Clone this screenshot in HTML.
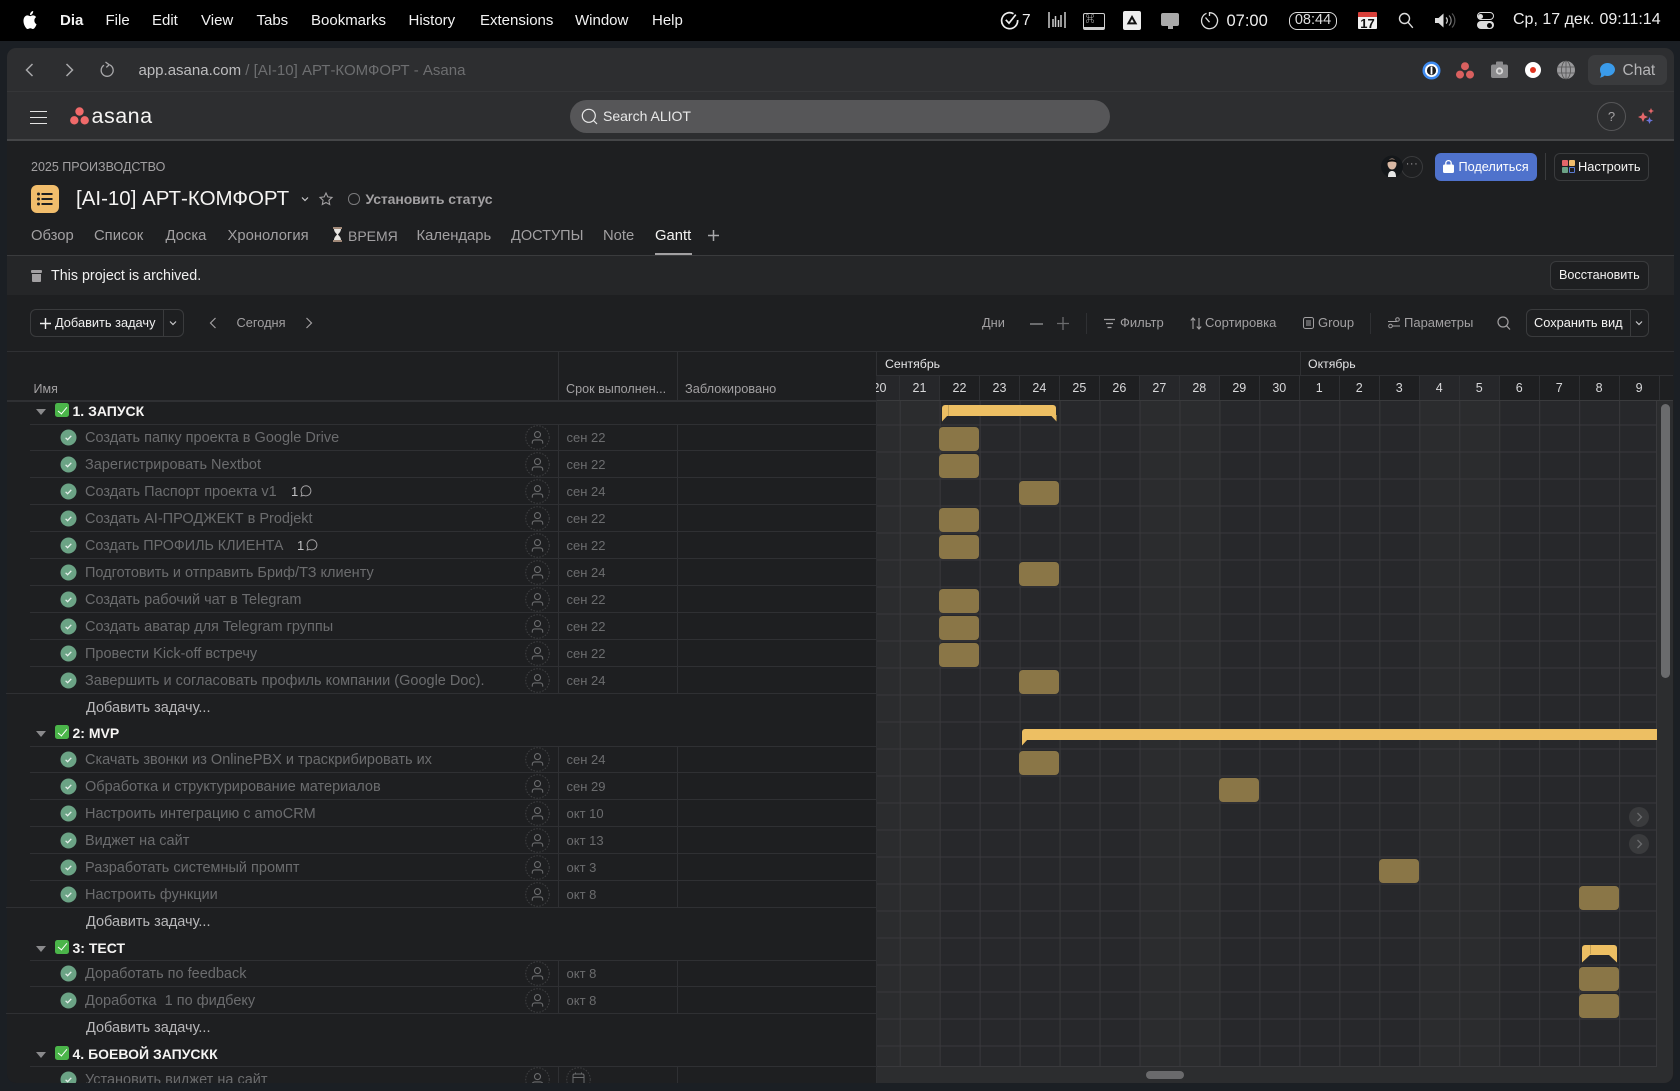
<!DOCTYPE html>
<html lang="ru"><head><meta charset="utf-8"><title>[AI-10] АРТ-КОМФОРТ - Asana</title>
<style>
*{box-sizing:border-box}
html,body{margin:0;padding:0;width:1680px;height:1091px;overflow:hidden;background:#1b1f24;font-family:"Liberation Sans","Noto Sans CJK SC",sans-serif;color:#f5f4f3}
.a{position:absolute;white-space:nowrap;line-height:20px}
.b{position:absolute}
svg{position:absolute;overflow:visible}
.m{font-size:15px;color:#f2f2f2;top:10.5px}
.tab{font-size:14.8px;color:#a2a0a2;top:225.5px}
.tb{font-size:13px;color:#a2a0a2;top:313px}
.r{position:absolute;left:30px;width:846px;height:27px;border-bottom:1px solid #2f3033}
.r.e{left:6px;width:870px}
.r.e>*{margin-left:24px}
.r .x{position:absolute;left:55px;top:4px;font-size:14.5px;line-height:20px;color:#6b6c6e;white-space:nowrap}
.r .d{position:absolute;left:536.5px;top:4px;font-size:13px;line-height:20px;color:#6b6c6e}
.r .n{position:absolute;left:0;top:4px;font-size:13px;line-height:20px;color:#8a8a8c}
.r svg.k{left:30px;top:5px;width:17px;height:17px}
.r svg.p{left:495px;top:1px;width:25px;height:25px}
.g{position:absolute;left:36px;height:14px}
.g i{position:absolute;left:0;top:3px;width:0;height:0;border-left:5px solid transparent;border-right:5px solid transparent;border-top:6px solid #8a8a8c}
.g b{position:absolute;left:19px;top:-3px;width:14px;height:14px;background:#4bb54a;border-radius:2.5px}
.g b:after{content:"";position:absolute;left:4.5px;top:1.5px;width:4px;height:8px;border:solid #fff;border-width:0 1.8px 1.8px 0;transform:rotate(40deg)}
.g span{position:absolute;left:36.5px;top:-5px;font-size:14px;font-weight:700;line-height:20px;color:#f5f4f3;white-space:nowrap}
.add{position:absolute;left:86px;font-size:14.5px;line-height:20px;color:#b8b8ba;white-space:nowrap}
.v{position:absolute;width:1px;background:#2f3033}
.bar{position:absolute;width:40px;height:24px;background:#8a7647;border-radius:4px}
.days{position:absolute;left:876px;top:376px;width:797px;height:24px;overflow:hidden;background:#1e1f21}
.days div{position:absolute;top:0;width:39.98px;height:24px;border-right:1px solid #2f3033;font-size:12.5px;line-height:24px;text-align:center;color:#d8d8da}
.days div.w{background:#26272a}
.gm{position:absolute;background:#edbf63}
.btn{position:absolute;border:1px solid #3a3b3d;border-radius:6px;background:#1e1f21}
</style></head><body>
<svg width="0" height="0" style="position:absolute">
<symbol id="k" viewBox="0 0 17 17"><circle cx="8.5" cy="8.5" r="8" fill="#6ba385"/><path d="M5.6 8.8l2 1.9 3.7-3.9" fill="none" stroke="#e8f0ec" stroke-width="1.3"/></symbol>
<symbol id="p" viewBox="0 0 25 25"><circle cx="12.5" cy="12.5" r="11.8" fill="none" stroke="#3e3f41" stroke-dasharray="1.6 1.4"/><circle cx="12.5" cy="9.6" r="3" fill="none" stroke="#6b6c6e" stroke-width="1.1"/><path d="M7.3 18.6v-1.3c0-1.4 1-2.4 2.4-2.4h5.6c1.4 0 2.4 1 2.4 2.4v1.3" fill="none" stroke="#6b6c6e" stroke-width="1.1"/></symbol>
<symbol id="ch" viewBox="0 0 10 10"><path d="M2 3.5l3 3 3-3" fill="none" stroke="#c8c8ca" stroke-width="1.2"/></symbol>
</svg>

<!-- macOS menu bar -->
<div class="b" style="left:0;top:0;width:1680px;height:41px;background:#000"></div>
<svg style="left:22px;top:11px" width="16" height="18" viewBox="0 0 24 24" preserveAspectRatio="none"><path fill="#fff" d="M12.152 6.896c-.948 0-2.415-1.078-3.96-1.04-2.04.027-3.91 1.183-4.961 3.014-2.117 3.675-.546 9.103 1.519 12.09 1.013 1.454 2.208 3.09 3.792 3.039 1.52-.065 2.09-.987 3.935-.987 1.831 0 2.35.987 3.96.948 1.637-.026 2.676-1.48 3.676-2.948 1.156-1.688 1.636-3.325 1.662-3.415-.039-.013-3.182-1.221-3.22-4.857-.026-3.04 2.48-4.494 2.597-4.559-1.429-2.09-3.623-2.324-4.39-2.376-2-.156-3.675 1.09-4.61 1.09zM15.53 3.83c.843-1.012 1.4-2.427 1.245-3.83-1.207.052-2.662.805-3.532 1.818-.78.896-1.454 2.338-1.273 3.714 1.338.104 2.715-.688 3.559-1.701"/></svg>
<div class="a m" style="left:60px;font-weight:700">Dia</div>
<div class="a m" style="left:105.5px">File</div>
<div class="a m" style="left:152px">Edit</div>
<div class="a m" style="left:201px">View</div>
<div class="a m" style="left:256.5px">Tabs</div>
<div class="a m" style="left:311px">Bookmarks</div>
<div class="a m" style="left:408.5px">History</div>
<div class="a m" style="left:480px">Extensions</div>
<div class="a m" style="left:575px">Window</div>
<div class="a m" style="left:652px">Help</div>

<svg style="left:1000px;top:11px" width="19" height="19" viewBox="0 0 19 19" fill="none" stroke="#eee" stroke-width="1.7"><path d="M13.5 2.7A8 8 0 1 0 17.6 9"/><path d="M5.8 8.8l3.2 3.4 6.800-8.600"/></svg>
<div class="a" style="left:1022px;top:11px;font-size:15.5px;color:#eee">7</div>
<svg style="left:1048px;top:12px" width="18" height="16" viewBox="0 0 18 16" stroke="#ccc" stroke-width="1.5"><path d="M1 0v16M5 7v8M7.5 4v11M10.5 8v7M13 3v12M17 0v16"/></svg>
<div class="b" style="left:1083px;top:13px;width:22px;height:16.5px;border:1.3px solid #d0d0d0;border-bottom-width:3px;border-radius:2px;font-size:9px;line-height:11px;color:#ddd;padding-left:1.5px">⌘</div>
<div class="b" style="left:1123px;top:11px;width:18px;height:19px;background:#eee;border-radius:2px"></div>
<svg style="left:1127px;top:15px" width="10" height="10" viewBox="0 0 10 10"><path d="M5 2L8.600 8.400H1.400z" fill="none" stroke="#111" stroke-width="2"/></svg>
<div class="b" style="left:1161px;top:13px;width:18px;height:13px;background:#aaa;border-radius:2px"></div>
<div class="b" style="left:1167.5px;top:26px;width:5px;height:3px;background:#aaa"></div>
<svg style="left:1200px;top:11px" width="19" height="20" viewBox="0 0 19 20" fill="none" stroke="#ddd" stroke-width="1.3"><path d="M6.5 2.3a8 8 0 1 0 3-.6V5"/><path d="M5.5 6.5l4 4.7"/></svg>
<div class="a" style="left:1226.500px;top:10.500px;font-size:16.500px;color:#eee">07:00</div>
<div class="a" style="left:1289px;top:12px;width:48px;height:17.500px;border:1.300px solid #ddd;border-radius:8px;font-size:14.500px;line-height:15px;text-align:center;color:#ddd">08:44</div>
<div class="b" style="left:1358px;top:12px;width:19px;height:17px;background:#f2f2f2;border-top:5px solid #d8403a;border-radius:1px;font-size:13px;line-height:13px;text-align:center;color:#111;font-weight:700">17</div>
<svg style="left:1398px;top:12px" width="16" height="17" viewBox="0 0 16 17" fill="none" stroke="#ddd" stroke-width="1.400"><circle cx="6.500" cy="6.500" r="5"/><path d="M10.200 10.400l4.600 5.400"/></svg>
<svg style="left:1434px;top:12px" width="22" height="17" viewBox="0 0 22 17" fill="none"><path d="M1 6h3.500L9.500 1.500v14L4.500 11H1z" fill="#ddd"/><path d="M12 5.500a4 4 0 0 1 0 6" stroke="#ccc" stroke-width="1.200"/><path d="M15 3.500a7 7 0 0 1 0 10" stroke="#888" stroke-width="1.200"/><path d="M18 1.500a10 10 0 0 1 0 14" stroke="#555" stroke-width="1.200"/></svg>
<div class="b" style="left:1477px;top:12px;width:16.500px;height:8px;border:1.400px solid #ddd;border-radius:4px"></div>
<div class="b" style="left:1478px;top:13.500px;width:5px;height:5px;background:#ddd;border-radius:50%"></div>
<div class="b" style="left:1477px;top:21px;width:16.500px;height:8px;background:#ddd;border-radius:4px"></div>
<div class="b" style="left:1487px;top:22.500px;width:5px;height:5px;background:#000;border-radius:50%"></div>
<div class="a" style="left:1513px;top:10px;font-size:16px;color:#eee">Ср, 17 дек.</div>
<div class="a" style="left:1599.500px;top:10px;font-size:16px;color:#eee">09:11:14</div>

<!-- Window -->
<div class="b" style="left:6.500px;top:48px;width:1667px;height:1035px;background:#1e1f21;border-radius:9px;overflow:hidden">
  <div class="b" style="left:0;top:0;width:1667px;height:92px;background:#2d2e30"></div>
  <div class="b" style="left:0;top:43px;width:1667px;height:1px;background:#353638"></div>
  <div class="b" style="left:0;top:91px;width:1667px;height:2px;background:#454648"></div>
  <div class="b" style="left:0;top:207px;width:1667px;height:1px;background:#3a3b3d"></div>
  <div class="b" style="left:0;top:208px;width:1667px;height:39px;background:#252628"></div>
</div>

<!-- Browser toolbar -->
<svg style="left:25px;top:63px" width="9" height="14" viewBox="0 0 9 14" fill="none" stroke="#a8a8aa" stroke-width="1.500"><path d="M7.500 1L1.500 7l6 6"/></svg>
<svg style="left:65px;top:63px" width="9" height="14" viewBox="0 0 9 14" fill="none" stroke="#a8a8aa" stroke-width="1.500"><path d="M1.500 1l6 6-6 6"/></svg>
<svg style="left:100px;top:61px" width="14" height="16" viewBox="0 0 14 16" fill="none" stroke="#a8a8aa" stroke-width="1.300"><path d="M4 4.200A6 6 0 1 0 10 4"/><path d="M5.500 1l3.800 2.800-3 2.600"/></svg>
<div class="a" style="left:138.500px;top:60.500px;font-size:15px;color:#bdbdbf">app.asana.com <span style="color:#6d6e70">/ [AI-10] АРТ-КОМФОРТ - Asana</span></div>

<svg style="left:1421.500px;top:60.500px" width="19" height="19" viewBox="0 0 19 19"><circle cx="9.500" cy="9.500" r="9" fill="#3f8bf0"/><circle cx="9.500" cy="9.500" r="6.500" fill="#fff"/><circle cx="9.500" cy="9.500" r="4.600" fill="#1c1c1e"/><rect x="8.600" y="5.500" width="1.800" height="8" fill="#fff"/></svg>
<svg style="left:1456px;top:61.500px" width="18" height="17" viewBox="0 0 18 17" fill="#d9605f"><circle cx="9" cy="4.200" r="4"/><circle cx="4" cy="12.600" r="4"/><circle cx="14" cy="12.600" r="4"/></svg>
<svg style="left:1490.500px;top:61px" width="17" height="17" viewBox="0 0 17 17"><rect x="0" y="3.500" width="17" height="13.500" rx="2" fill="#8c8c8e"/><rect x="5" y="0.500" width="7" height="4" rx="1" fill="#8c8c8e"/><circle cx="8.500" cy="10" r="3.600" fill="#d8d8d8"/><circle cx="8.500" cy="10" r="1.800" fill="#8c8c8e"/></svg>
<svg style="left:1525px;top:62px" width="16" height="16" viewBox="0 0 16 16"><circle cx="8" cy="8" r="8" fill="#fff"/><circle cx="8" cy="8" r="3" fill="#e0321e"/></svg>
<svg style="left:1557px;top:61px" width="18" height="18" viewBox="0 0 18 18" fill="none"><circle cx="9" cy="9" r="9" fill="#9a9a9c"/><g stroke="#555" stroke-width=".8"><path d="M0 6h18M0 12h18M9 0v18"/><ellipse cx="9" cy="9" rx="4.500" ry="9"/></g></svg>
<div class="b" style="left:1588px;top:55px;width:79px;height:30px;background:#3a3b3d;border-radius:7px"></div>
<svg style="left:1599px;top:62px" width="16" height="17" viewBox="0 0 16 17"><path d="M8.500 1C12.500 1 16 3.900 16 7.500S12.500 14 8.500 14c-1 0-2-.2-2.800-.5C4.700 14.600 2.800 15.500.8 15.600 1.800 14.500 2.200 13.100 2.100 11.700 1.300 10.700 1 9.200 1 7.500 1 3.900 4.500 1 8.500 1z" fill="#3a9bea"/></svg>
<div class="a" style="left:1622.500px;top:61px;font-size:15.500px;color:#b4b4b6">Chat</div>

<!-- Asana top bar -->
<div class="b" style="left:30px;top:110.500px;width:17px;height:1.500px;background:#e4e4e4"></div>
<div class="b" style="left:30px;top:116.500px;width:17px;height:1.500px;background:#e4e4e4"></div>
<div class="b" style="left:30px;top:122.500px;width:17px;height:1.500px;background:#e4e4e4"></div>
<svg style="left:70px;top:107px" width="19" height="18" viewBox="0 0 19 18" fill="#f06a6a"><circle cx="9.500" cy="4.500" r="4.200"/><circle cx="4.300" cy="13.300" r="4.200"/><circle cx="14.700" cy="13.300" r="4.200"/></svg>
<div class="a" style="left:91.500px;top:105px;font-size:21.500px;color:#f5f4f3;line-height:22px;letter-spacing:.5px">asana</div>
<div class="b" style="left:570px;top:100px;width:540px;height:32.500px;background:#565658;border-radius:17px"></div>
<svg style="left:581px;top:108px" width="17" height="17" viewBox="0 0 17 17" fill="none" stroke="#e8e8e8" stroke-width="1.200"><circle cx="7.800" cy="7.800" r="6.500"/><path d="M12.500 12.500l3.500 3.500"/></svg>
<div class="a" style="left:603px;top:106px;font-size:14px;color:#e8e8e8">Search ALIOT</div>
<div class="b" style="left:1597px;top:102px;width:29px;height:29px;border:1px solid #565658;border-radius:50%;font-size:13px;line-height:27px;text-align:center;color:#a2a0a2">?</div>
<svg style="left:1638px;top:108px" width="18" height="18" viewBox="0 0 18 18"><path d="M5 4l1.500 3.500L10 9 6.500 10.500 5 14 3.500 10.500 0 9l3.500-1.500z" fill="#e4676a"/><path d="M13 0l.9 2.100 2.100.9-2.100.9L13 6l-.9-2.100L10 3l2.100-.9z" fill="#e4676a"/><path d="M11.500 9l1 2.500 2.500 1-2.500 1-1 2.500-1-2.500-2.500-1 2.500-1z" fill="#6a74d8"/></svg>

<!-- Project header -->
<div class="a" style="left:31px;top:157px;font-size:12.500px;color:#a2a0a2">2025 ПРОИЗВОДСТВО</div>
<div class="b" style="left:30.500px;top:185px;width:28px;height:27.500px;background:#f1bd6c;border-radius:6px"></div>
<svg style="left:37px;top:192px" width="16" height="14" viewBox="0 0 16 14" fill="#1e1f21"><circle cx="1.500" cy="2" r="1.500"/><circle cx="1.500" cy="7" r="1.500"/><circle cx="1.500" cy="12" r="1.500"/><rect x="4.500" y="1" width="11" height="2"/><rect x="4.500" y="6" width="11" height="2"/><rect x="4.500" y="11" width="11" height="2"/></svg>
<div class="a" style="left:76px;top:189px;font-size:20.500px;color:#f5f4f3">[AI-10] АРТ-КОМФОРТ</div>
<svg style="left:300px;top:194px" width="10" height="10"><use href="#ch"/></svg>
<svg style="left:319px;top:191.500px" width="14" height="14" viewBox="0 0 14 14" fill="none" stroke="#a2a0a2" stroke-width="1.100"><path d="M7 1l1.800 3.900 4.200.5-3.100 2.900.8 4.200L7 10.500l-3.700 2 .8-4.200L1 5.400l4.200-.5z"/></svg>
<div class="b" style="left:348px;top:193px;width:11.500px;height:11.500px;border:1px solid #7a7a7c;border-radius:50%"></div>
<div class="a" style="left:365.500px;top:189px;font-size:14px;color:#a2a0a2;font-weight:700;letter-spacing:-.1px">Установить статус</div>

<div class="a tab" style="left:31px">Обзор</div>
<div class="a tab" style="left:94px">Список</div>
<div class="a tab" style="left:165.500px">Доска</div>
<div class="a tab" style="left:227.500px">Хронология</div>
<svg style="left:332px;top:227px" width="11" height="15" viewBox="0 0 11 15"><rect x="1" y="0" width="9" height="2" fill="#a08878"/><rect x="1" y="13" width="9" height="2" fill="#a08878"/><path d="M2 2h7c0 3-2.500 4.500-3 5.500.5 1 3 2.500 3 5.500H2c0-3 2.500-4.500 3-5.500C4.500 6.500 2 5 2 2z" fill="#e8e6e2"/></svg>
<div class="a tab" style="left:348px;font-size:14px">ВРЕМЯ</div>
<div class="a tab" style="left:416.500px">Календарь</div>
<div class="a tab" style="left:511px;font-size:14.500px">ДОСТУПЫ</div>
<div class="a tab" style="left:603px">Note</div>
<div class="a tab" style="left:655px;color:#f5f4f3;font-weight:400">Gantt</div>
<div class="b" style="left:655px;top:253px;width:36.500px;height:2px;background:#a2a0a2"></div>
<svg style="left:707px;top:229px" width="13" height="13" stroke="#a8a8aa" stroke-width="1.500"><path d="M6.500 1v11M1 6.500h11"/></svg>

<div class="b" style="left:1434.500px;top:152.500px;width:102.500px;height:28.500px;background:#4f72cc;border-radius:6px"></div>
<svg style="left:1443px;top:160px" width="11" height="13" viewBox="0 0 11 13"><rect x="0" y="4.500" width="11" height="8.500" rx="1.500" fill="#fff"/><path d="M2.800 5V3.300a2.700 2.700 0 0 1 5.400 0V5" fill="none" stroke="#fff" stroke-width="1.300"/></svg>
<div class="a" style="left:1458.500px;top:157px;font-size:12.700px;color:#fff">Поделиться</div>
<div class="b" style="left:1545px;top:153px;width:1px;height:27px;background:#3a3b3d"></div>
<div class="btn" style="left:1554px;top:152.500px;width:95px;height:28.500px"></div>
<div class="b" style="left:1562px;top:160px;width:5.500px;height:5.500px;background:#e4676a;border-radius:1px"></div>
<div class="b" style="left:1569px;top:160px;width:5.500px;height:5.500px;background:#f1bd6c;border-radius:1px"></div>
<div class="b" style="left:1562px;top:167px;width:5.500px;height:5.500px;background:#6ba385;border-radius:1px"></div>
<div class="b" style="left:1569px;top:167px;width:5.500px;height:5.500px;border:1px solid #5a7ad0;border-radius:1px"></div>
<div class="a" style="left:1578px;top:157px;font-size:12.800px;color:#f5f4f3">Настроить</div>
<div class="b" style="left:1401px;top:155.500px;width:22px;height:22px;border:1px solid #3a3b3d;border-radius:50%;font-size:11px;line-height:15px;text-align:center;color:#a2a0a2;letter-spacing:.5px">···</div>
<svg style="left:1381px;top:155px" width="22" height="23" viewBox="0 0 22 23"><circle cx="11" cy="11.500" r="11" fill="#14171a"/><ellipse cx="11" cy="9" rx="4.500" ry="5.500" fill="#d8b8a4"/><path d="M6 8c0-5 10-5 10 0-2-2-8-2-10 0z" fill="#0c0c0c"/><path d="M7 22c0-5 2-6 4-6s4 1 4 6z" fill="#e6e6e6"/></svg>

<!-- Archive banner -->
<svg style="left:31px;top:270px" width="11" height="12" viewBox="0 0 11 12" fill="#a2a0a2"><rect x="0" y="0" width="11" height="3" rx="1"/><path d="M1 4h9v7a1 1 0 0 1-1 1H2a1 1 0 0 1-1-1z"/></svg>
<div class="a" style="left:51px;top:265.500px;font-size:14.300px;color:#f0f0f0">This project is archived.</div>
<div class="btn" style="left:1550px;top:261px;width:99px;height:28.500px"></div>
<div class="a" style="left:1559px;top:265px;font-size:12.600px;color:#f5f4f3">Восстановить</div>

<!-- Toolbar -->
<div class="btn" style="left:30px;top:309px;width:154px;height:28px"></div>
<div class="b" style="left:163px;top:309px;width:1px;height:28px;background:#3a3b3d"></div>
<svg style="left:40px;top:318px" width="11" height="11" stroke="#f0f0f0" stroke-width="1.400"><path d="M5.500 0v11M0 5.500h11"/></svg>
<div class="a" style="left:55px;top:313px;font-size:12.800px;color:#f0f0f0">Добавить задачу</div>
<svg style="left:168px;top:318px" width="10" height="10"><use href="#ch"/></svg>
<svg style="left:209px;top:317px" width="8" height="12" viewBox="0 0 8 12" fill="none" stroke="#a2a0a2" stroke-width="1.200"><path d="M6.500 1l-5 5 5 5"/></svg>
<div class="a tb" style="left:236.500px;font-size:12.800px">Сегодня</div>
<svg style="left:305px;top:317px" width="8" height="12" viewBox="0 0 8 12" fill="none" stroke="#a2a0a2" stroke-width="1.200"><path d="M1.500 1l5 5-5 5"/></svg>

<div class="a tb" style="left:982px;font-size:12.800px">Дни</div>
<div class="b" style="left:1029.500px;top:323px;width:13px;height:1.500px;background:#6b6c6e"></div>
<svg style="left:1057px;top:317px" width="12" height="13" stroke="#6b6c6e" stroke-width="1.300"><path d="M6 0v13M0 6.500h12"/></svg>
<div class="b" style="left:1086px;top:313px;width:1px;height:21px;background:#2f3033"></div>
<svg style="left:1104px;top:317.500px" width="11" height="11" stroke="#a2a0a2" stroke-width="1.200"><path d="M0 1.500h11M2 5.500h7M3.500 9.500h4"/></svg>
<div class="a tb" style="left:1120px">Фильтр</div>
<svg style="left:1190px;top:316.500px" width="12" height="13" fill="none" stroke="#a2a0a2" stroke-width="1.100"><path d="M3 12V1M.8 3.500L3 1l2.200 2.500M9 1v11M6.800 9.500L9 12l2.200-2.500"/></svg>
<div class="a tb" style="left:1205px">Сортировка</div>
<svg style="left:1303px;top:317px" width="11" height="12" fill="none" stroke="#a2a0a2" stroke-width="1"><rect x=".5" y=".5" width="10" height="11" rx="2"/><path d="M3 4h5M3 6h5M3 8h5"/></svg>
<div class="a tb" style="left:1318px">Group</div>
<div class="b" style="left:1370px;top:313px;width:1px;height:21px;background:#2f3033"></div>
<svg style="left:1387.500px;top:317px" width="12" height="12" fill="none" stroke="#a2a0a2" stroke-width="1"><circle cx="2.500" cy="9" r="1.800"/><circle cx="9.500" cy="2.500" r="1.800"/><path d="M0 4.500h9M4.500 9H12"/></svg>
<div class="a tb" style="left:1404px">Параметры</div>
<svg style="left:1497px;top:315.500px" width="14" height="14" fill="none" stroke="#a2a0a2" stroke-width="1.200"><circle cx="6" cy="6" r="5"/><path d="M9.500 9.800L13 13.500"/></svg>
<div class="btn" style="left:1525.500px;top:309px;width:123.500px;height:28px"></div>
<div class="b" style="left:1630px;top:309px;width:1px;height:28px;background:#3a3b3d"></div>
<div class="a" style="left:1534px;top:313px;font-size:12.800px;color:#f5f4f3">Сохранить вид</div>
<svg style="left:1634px;top:318px" width="10" height="10"><use href="#ch"/></svg>

<!-- Table header -->
<div class="b" style="left:6.500px;top:351px;width:1667px;height:1px;background:#2f3033"></div>
<div class="b" style="left:6.500px;top:400px;width:870px;height:1.500px;background:#2f3033"></div>
<div class="a" style="left:33.500px;top:379px;font-size:12.500px;color:#a2a0a2">Имя</div>
<div class="a" style="left:566px;top:379px;font-size:12.600px;color:#a2a0a2">Срок выполнен...</div>
<div class="a" style="left:685px;top:379px;font-size:12.800px;color:#a2a0a2">Заблокировано</div>
<div class="v" style="left:558px;top:351px;height:49px"></div>
<div class="v" style="left:677px;top:351px;height:49px"></div>

<!-- Left list -->
<div class="g" style="top:406px"><i></i><b></b><span>1. ЗАПУСК</span></div>
<div class="b" style="left:30px;top:423.500px;width:846px;height:1px;background:#2f3033"></div>
<div class="r" style="top:424px"><svg class="k"><use href="#k"/></svg><div class="x">Создать папку проекта в Google Drive</div><svg class="p"><use href="#p"/></svg><div class="d">сен 22</div></div>
<div class="r" style="top:451px"><svg class="k"><use href="#k"/></svg><div class="x">Зарегистрировать Nextbot</div><svg class="p"><use href="#p"/></svg><div class="d">сен 22</div></div>
<div class="r" style="top:478px"><svg class="k"><use href="#k"/></svg><div class="x">Создать Паспорт проекта v1</div><div class="n" style="left:261px;color:#c0c0c2">1</div><svg style="left:270px;top:7px" width="12" height="12" viewBox="0 0 12 12" fill="none" stroke="#a2a0a2"><path d="M6 .8a5 5 0 1 1-2.300 9.500L1.200 11l.7-2.500A5 5 0 0 1 6 .8z"/></svg><svg class="p"><use href="#p"/></svg><div class="d">сен 24</div></div>
<div class="r" style="top:505px"><svg class="k"><use href="#k"/></svg><div class="x">Создать AI-ПРОДЖЕКТ в Prodjekt</div><svg class="p"><use href="#p"/></svg><div class="d">сен 22</div></div>
<div class="r" style="top:532px"><svg class="k"><use href="#k"/></svg><div class="x" style="font-size:14.300px">Создать ПРОФИЛЬ КЛИЕНТА</div><div class="n" style="left:267px;color:#c0c0c2">1</div><svg style="left:276px;top:7px" width="12" height="12" viewBox="0 0 12 12" fill="none" stroke="#a2a0a2"><path d="M6 .8a5 5 0 1 1-2.300 9.500L1.200 11l.7-2.500A5 5 0 0 1 6 .8z"/></svg><svg class="p"><use href="#p"/></svg><div class="d">сен 22</div></div>
<div class="r" style="top:559px"><svg class="k"><use href="#k"/></svg><div class="x">Подготовить и отправить Бриф/ТЗ клиенту</div><svg class="p"><use href="#p"/></svg><div class="d">сен 24</div></div>
<div class="r" style="top:586px"><svg class="k"><use href="#k"/></svg><div class="x">Создать рабочий чат в Telegram</div><svg class="p"><use href="#p"/></svg><div class="d">сен 22</div></div>
<div class="r" style="top:613px"><svg class="k"><use href="#k"/></svg><div class="x">Создать аватар для Telegram группы</div><svg class="p"><use href="#p"/></svg><div class="d">сен 22</div></div>
<div class="r" style="top:640px"><svg class="k"><use href="#k"/></svg><div class="x">Провести Kick-off встречу</div><svg class="p"><use href="#p"/></svg><div class="d">сен 22</div></div>
<div class="r e" style="top:667px"><svg class="k"><use href="#k"/></svg><div class="x">Завершить и согласовать профиль компании (Google Doc).</div><svg class="p"><use href="#p"/></svg><div class="d">сен 24</div></div>
<div class="add" style="top:698px">Добавить задачу...</div>

<div class="g" style="top:728px"><i></i><b></b><span>2: MVP</span></div>
<div class="b" style="left:30px;top:745.500px;width:846px;height:1px;background:#2f3033"></div>
<div class="r" style="top:746px"><svg class="k"><use href="#k"/></svg><div class="x">Скачать звонки из OnlinePBX и траскрибировать их</div><svg class="p"><use href="#p"/></svg><div class="d">сен 24</div></div>
<div class="r" style="top:773px"><svg class="k"><use href="#k"/></svg><div class="x">Обработка и структурирование материалов</div><svg class="p"><use href="#p"/></svg><div class="d">сен 29</div></div>
<div class="r" style="top:800px"><svg class="k"><use href="#k"/></svg><div class="x">Настроить интеграцию с amoCRM</div><svg class="p"><use href="#p"/></svg><div class="d">окт 10</div></div>
<div class="r" style="top:827px"><svg class="k"><use href="#k"/></svg><div class="x">Виджет на сайт</div><svg class="p"><use href="#p"/></svg><div class="d">окт 13</div></div>
<div class="r" style="top:854px"><svg class="k"><use href="#k"/></svg><div class="x">Разработать системный промпт</div><svg class="p"><use href="#p"/></svg><div class="d">окт 3</div></div>
<div class="r e" style="top:881px"><svg class="k"><use href="#k"/></svg><div class="x">Настроить функции</div><svg class="p"><use href="#p"/></svg><div class="d">окт 8</div></div>
<div class="add" style="top:912px">Добавить задачу...</div>

<div class="g" style="top:942.500px"><i></i><b></b><span>3: ТЕСТ</span></div>
<div class="b" style="left:30px;top:959.500px;width:846px;height:1px;background:#2f3033"></div>
<div class="r" style="top:960px"><svg class="k"><use href="#k"/></svg><div class="x">Доработать по feedback</div><svg class="p"><use href="#p"/></svg><div class="d">окт 8</div></div>
<div class="r e" style="top:987px"><svg class="k"><use href="#k"/></svg><div class="x">Доработка&nbsp; 1 по фидбеку</div><svg class="p"><use href="#p"/></svg><div class="d">окт 8</div></div>
<div class="add" style="top:1018px">Добавить задачу...</div>

<div class="g" style="top:1048.500px"><i></i><b></b><span>4. БОЕВОЙ ЗАПУСКК</span></div>
<div class="b" style="left:30px;top:1065.500px;width:846px;height:1px;background:#2f3033"></div>
<div class="b" style="left:6px;top:1066px;width:870px;height:17px;overflow:hidden">
  <div class="r" style="top:0;left:24px;border:0"><svg class="k"><use href="#k"/></svg><div class="x">Установить виджет на сайт</div><svg class="p"><use href="#p"/></svg>
  <svg style="left:536px;top:1px" width="25" height="25" viewBox="0 0 25 25" fill="none"><circle cx="12.500" cy="12.500" r="11.800" stroke="#3e3f41" stroke-dasharray="1.600 1.400"/><rect x="7" y="7" width="11" height="11" rx="1.500" stroke="#6b6c6e"/><path d="M7 10.500h11M9.500 5.500v2M15.500 5.500v2" stroke="#6b6c6e"/></svg></div>
</div>

<div class="v" style="left:558px;top:424px;height:270px"></div>
<div class="v" style="left:677px;top:424px;height:270px"></div>
<div class="v" style="left:558px;top:746px;height:162px"></div>
<div class="v" style="left:677px;top:746px;height:162px"></div>
<div class="v" style="left:558px;top:960px;height:54px"></div>
<div class="v" style="left:677px;top:960px;height:54px"></div>
<div class="v" style="left:558px;top:1066px;height:17px"></div>
<div class="v" style="left:677px;top:1066px;height:17px"></div>

<!-- Timeline header -->
<div class="b" style="left:876px;top:351px;width:1px;height:732px;background:#2f3033"></div>
<div class="b" style="left:877px;top:352px;width:796px;height:24px;background:#1e1f21;border-bottom:1px solid #2f3033"></div>
<div class="a" style="left:885px;top:353.500px;font-size:12.300px;color:#e4e4e6">Сентябрь</div>
<div class="a" style="left:1308px;top:353.500px;font-size:12.300px;color:#e4e4e6">Октябрь</div>
<div class="b" style="left:1299.500px;top:352px;width:1px;height:24px;background:#2f3033"></div>
<div class="days">
<div class="w" style="left:-16px">20</div><div class="w" style="left:24px">21</div><div style="left:64px">22</div><div style="left:104px">23</div><div style="left:143.900px">24</div><div style="left:183.900px">25</div><div style="left:223.900px">26</div><div class="w" style="left:263.900px">27</div><div class="w" style="left:303.800px">28</div><div style="left:343.800px">29</div><div style="left:383.800px">30</div><div style="left:423.800px">1</div><div style="left:463.800px">2</div><div style="left:503.700px">3</div><div class="w" style="left:543.700px">4</div><div class="w" style="left:583.700px">5</div><div style="left:623.700px">6</div><div style="left:663.700px">7</div><div style="left:703.600px">8</div><div style="left:743.600px">9</div><div style="left:783.600px"></div>
</div>

<!-- Timeline grid -->
<div class="b" style="left:877px;top:400px;width:796px;height:683px;background:#2c2d2f;border-top:1px solid #3a3b3d;border-radius:0 0 9px 0"></div>
<div class="b" style="left:877px;top:401px;width:780px;height:666px;background:#27282b;overflow:hidden">
  <div class="b" style="left:0;top:0;width:63px;height:666px;background:#2b2c2e"></div>
  <div class="b" style="left:262.500px;top:0;width:80px;height:666px;background:#2b2c2e"></div>
  <div class="b" style="left:542.500px;top:0;width:80px;height:666px;background:#2b2c2e"></div>
  <div class="b" style="left:0;top:0;width:780px;height:666px;background-image:linear-gradient(90deg,#39393c 1.200px,transparent 1.200px);background-size:39.980px 100%;background-position:22.700px 0"></div>
  <div class="b" style="left:0;top:0;width:780px;height:666px;background-image:linear-gradient(180deg,#39393c 1.200px,transparent 1.200px);background-size:100% 27px;background-position:0 23.500px"></div>
  <div class="b" style="left:0;top:665px;width:780px;height:1.200px;background:#39393c"></div>
  <div class="b" style="left:779px;top:0;width:1.200px;height:666px;background:#39393c"></div>
</div>

<!-- Timeline bars -->
<div class="gm" style="left:941.500px;top:405px;width:114.500px;height:10.500px;border-radius:3px 3px 0 0"></div>
<svg style="left:941.500px;top:415px" width="115" height="7" viewBox="0 0 115 7" fill="#edbf63"><path d="M0 0h6L0 6.500zM114.500 0h-6l6 6.500z"/></svg>
<div class="b" style="left:948px;top:405px;width:1px;height:11px;background:#c4a054"></div>
<div class="bar" style="left:939px;top:426.700px"></div>
<div class="bar" style="left:939px;top:453.700px"></div>
<div class="bar" style="left:1019px;top:480.700px"></div>
<div class="bar" style="left:939px;top:507.700px"></div>
<div class="bar" style="left:939px;top:534.700px"></div>
<div class="bar" style="left:1019px;top:561.700px"></div>
<div class="bar" style="left:939px;top:588.700px"></div>
<div class="bar" style="left:939px;top:615.700px"></div>
<div class="bar" style="left:939px;top:642.700px"></div>
<div class="bar" style="left:1019px;top:669.700px"></div>

<div class="gm" style="left:1022px;top:729px;width:635px;height:10.500px;border-radius:3px 0 0 0"></div>
<svg style="left:1022px;top:739px" width="8" height="7" viewBox="0 0 8 7" fill="#edbf63"><path d="M0 0h6L0 6.500z"/></svg>
<div class="bar" style="left:1019px;top:750.700px"></div>
<div class="bar" style="left:1219.300px;top:777.700px"></div>
<div class="bar" style="left:1379.400px;top:858.700px"></div>
<div class="bar" style="left:1579px;top:885.700px"></div>
<svg style="left:1582px;top:944.500px" width="35" height="17.500" viewBox="0 0 35 17.500" fill="#edbf63"><path d="M3 0h29a3 3 0 0 1 3 3v14.500L27 10H8L0 17.500V3a3 3 0 0 1 3-3z"/></svg>
<div class="b" style="left:1590px;top:945px;width:1px;height:9px;background:#c4a054"></div>
<div class="bar" style="left:1579px;top:966.700px"></div>
<div class="bar" style="left:1579px;top:993.700px"></div>

<div class="b" style="left:1628.700px;top:806.700px;width:20px;height:20px;background:#3a3b3d;border-radius:50%"></div>
<svg style="left:1635.500px;top:812px" width="7" height="10" viewBox="0 0 7 10" fill="none" stroke="#6b6c6e" stroke-width="1.300"><path d="M1.500 1l4 4-4 4"/></svg>
<div class="b" style="left:1628.700px;top:834px;width:20px;height:20px;background:#3a3b3d;border-radius:50%"></div>
<svg style="left:1635.500px;top:839px" width="7" height="10" viewBox="0 0 7 10" fill="none" stroke="#6b6c6e" stroke-width="1.300"><path d="M1.500 1l4 4-4 4"/></svg>

<!-- Scrollbars -->
<div class="b" style="left:1661px;top:404px;width:9px;height:274px;background:#6a6b6d;border-radius:5px"></div>
<div class="b" style="left:1146px;top:1071px;width:38px;height:8px;background:#6a6a6c;border-radius:4px"></div>
</body></html>
